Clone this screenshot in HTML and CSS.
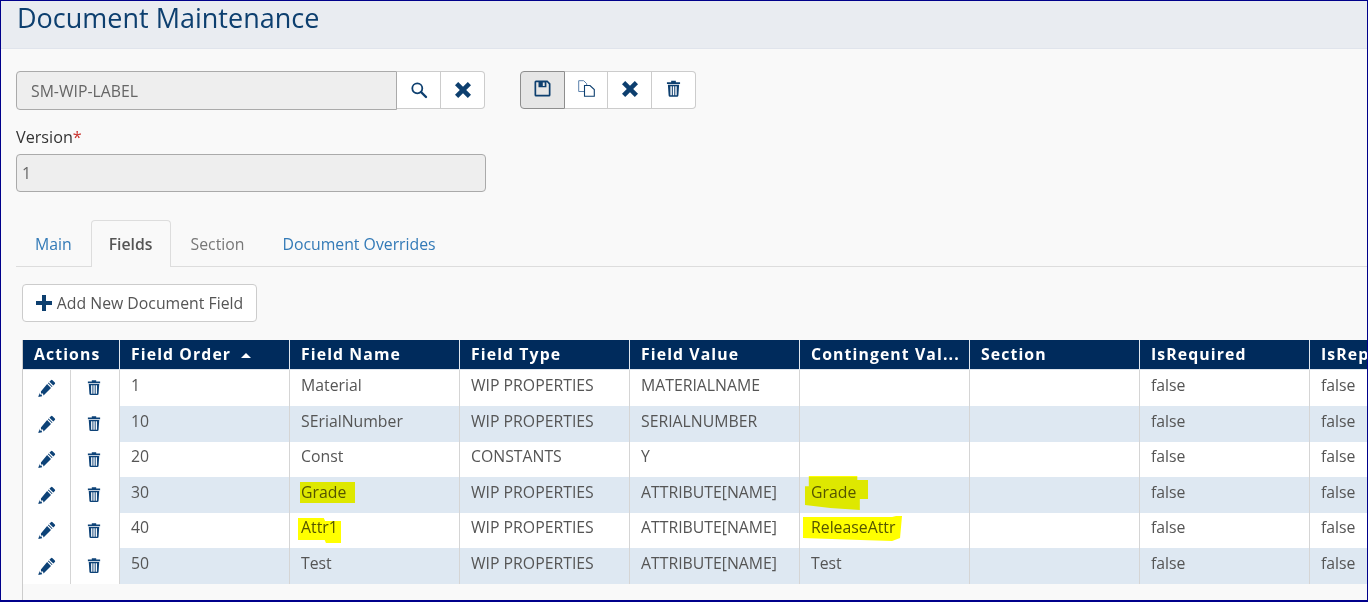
FILE: index.html
```html
<!DOCTYPE html>
<html lang="en">
  <head>
    <meta charset="UTF-8" />
    <title>Document Maintenance</title>
    <link rel="stylesheet" href="styles.css">
  </head>
  <body>
    <svg class="sprites" width="0" height="0">
      <symbol id="i-trash" viewBox="0 0 16 18">
        <path d="M5.500 2.200V.8h5v1.400H15v1.900H1V2.200zM2 5h12l-.8 11.400q-.1 1.300-1.400 1.300H4.200q-1.300 0-1.400-1.300zM4.700 6.500v9.600h1.500V6.500zM7.300 6.500v9.600h1.500V6.500zM9.900 6.500v9.600h1.500V6.500z" fill-rule="evenodd"/>
      </symbol>
      <symbol id="i-pencil" viewBox="0 0 18 18">
        <path d="M12.900 1.200q.8-.8 1.600 0l2.300 2.300q.8.8 0 1.600l-1.500 1.500-3.900-3.900zM10.600 3.500l3.900 3.900-.7.700-3.900-3.900zM9.100 5l3.900 3.900-7.500 7.500-.5-1.900-2-.1-.1-2zM1.600 13.500l.1 1.900 1.900.1.500 1.700-3.800.8z"/>
      </symbol>
      <symbol id="i-times" viewBox="0 0 18 18">
        <path d="M1 4.200 4.200 1 9 5.800 13.800 1 17 4.200 12.200 9 17 13.800 13.800 17 9 12.200 4.200 17 1 13.800 5.800 9z"/>
      </symbol>
    </svg>

    <div class="frame">
      <header class="page-head">
        <h1>Document Maintenance</h1>
      </header>

      <section class="form-top">
        <div class="top-row">
          <div class="lookup">
            <input class="lookup-input" type="text" value="SM-WIP-LABEL" disabled />
            <button class="icon-btn">
              <svg width="18" height="18" viewBox="0 0 18 18"><circle class="line" cx="7.300" cy="7.300" r="5" stroke="currentColor" stroke-width="1.800"/><path d="M11 11l5 5" stroke="currentColor" stroke-width="2.400" stroke-linecap="round"/></svg>
            </button>
            <button class="icon-btn last">
              <svg width="18" height="18"><use href="#i-times"/></svg>
            </button>
          </div>

          <div class="toolbar">
            <button class="tool-btn active">
              <svg width="17" height="17" viewBox="0 0 17 17"><path d="M2 .5h11.500L16.500 3.500V15q0 1.500-1.500 1.500H2Q.5 16.500.5 15V2Q.5.500 2 .5zM2.200 2.200v12.600h12.600V4.200L13 2.200h-.6v5H4.500v-5zM8.800 2.600v3.400h1.900V2.600z" fill-rule="evenodd"/></svg>
            </button>
            <button class="tool-btn">
              <svg width="17" height="17" viewBox="0 0 17 17"><path class="line" d="M6 11.500H.7V.7h5l3 3v2" stroke="#5c82ad" stroke-width="1"/><path class="line" d="M6.500 5.500h5.500l4.300 4v6.800H6.500z" stroke="currentColor" stroke-width="1.100"/></svg>
            </button>
            <button class="tool-btn">
              <svg width="18" height="18"><use href="#i-times"/></svg>
            </button>
            <button class="tool-btn">
              <svg width="15" height="17"><use href="#i-trash"/></svg>
            </button>
          </div>
        </div>

        <label class="field-label">Version<span class="req">*</span></label>
        <input class="version-input" type="text" value="1" disabled />
      </section>

      <nav class="tabs">
        <a class="tab">Main</a>
        <a class="tab current">Fields</a>
        <a class="tab off">Section</a>
        <a class="tab">Document Overrides</a>
      </nav>

      <div class="add-row">
        <button class="add-btn">
          <svg width="16" height="16" viewBox="0 0 16 16"><path d="M6 0h4v6h6v4h-6v6H6v-6H0V6h6z"/></svg>
          Add New Document Field
        </button>
      </div>

      <div class="grid-wrap">
        <table class="grid">
          <colgroup>
            <col class="c-act" /><col class="c-act2" />
            <col class="c-col" /><col class="c-col" /><col class="c-col" /><col class="c-col" />
            <col class="c-col" /><col class="c-col" /><col class="c-col" /><col class="c-col" />
          </colgroup>
          <thead>
            <tr>
              <th colspan="2">Actions</th>
              <th>Field Order <span class="sort"></span></th>
              <th>Field Name</th>
              <th>Field Type</th>
              <th>Field Value</th>
              <th>Contingent Val...</th>
              <th>Section</th>
              <th>IsRequired</th>
              <th>IsRepeat</th>
            </tr>
          </thead>
          <tbody>
            <tr>
              <td class="act"><svg width="18" height="18"><use href="#i-pencil"/></svg></td>
              <td class="act"><svg width="14" height="17"><use href="#i-trash"/></svg></td>
              <td>1</td><td>Material</td><td>WIP PROPERTIES</td><td>MATERIALNAME</td><td></td><td></td><td>false</td><td>false</td>
            </tr>
            <tr>
              <td class="act"><svg width="18" height="18"><use href="#i-pencil"/></svg></td>
              <td class="act"><svg width="14" height="17"><use href="#i-trash"/></svg></td>
              <td>10</td><td>SErialNumber</td><td>WIP PROPERTIES</td><td>SERIALNUMBER</td><td></td><td></td><td>false</td><td>false</td>
            </tr>
            <tr>
              <td class="act"><svg width="18" height="18"><use href="#i-pencil"/></svg></td>
              <td class="act"><svg width="14" height="17"><use href="#i-trash"/></svg></td>
              <td>20</td><td>Const</td><td>CONSTANTS</td><td>Y</td><td></td><td></td><td>false</td><td>false</td>
            </tr>
            <tr>
              <td class="act"><svg width="18" height="18"><use href="#i-pencil"/></svg></td>
              <td class="act"><svg width="14" height="17"><use href="#i-trash"/></svg></td>
              <td>30</td><td><span class="mark mark-a">Grade</span></td><td>WIP PROPERTIES</td><td>ATTRIBUTE[NAME]</td><td><span class="mark mark-c">Grade</span></td><td></td><td>false</td><td>false</td>
            </tr>
            <tr>
              <td class="act"><svg width="18" height="18"><use href="#i-pencil"/></svg></td>
              <td class="act"><svg width="14" height="17"><use href="#i-trash"/></svg></td>
              <td>40</td><td><span class="mark mark-b">Attr1</span></td><td>WIP PROPERTIES</td><td>ATTRIBUTE[NAME]</td><td><span class="mark mark-d">ReleaseAttr</span></td><td></td><td>false</td><td>false</td>
            </tr>
            <tr>
              <td class="act"><svg width="18" height="18"><use href="#i-pencil"/></svg></td>
              <td class="act"><svg width="14" height="17"><use href="#i-trash"/></svg></td>
              <td>50</td><td>Test</td><td>WIP PROPERTIES</td><td>ATTRIBUTE[NAME]</td><td>Test</td><td></td><td>false</td><td>false</td>
            </tr>
          </tbody>
        </table>
      </div>
    </div>
  </body>
</html>
```

FILE: styles.css
```css
html, body {
  margin: 0;
  height: 100%;
  overflow: hidden;
}
body {
  font-family: "Open Sans", sans-serif;
  font-size: 15.8px;
  color: #555;
  background: #f9f9f9;
}
.sprites {
  position: absolute;
}
svg {
  fill: currentColor;
  display: block;
}
svg .line {
  fill: none;
}
.frame {
  box-sizing: border-box;
  height: 602px;
  border: 1px solid #00008b;
  border-bottom-width: 2px;
  overflow: hidden;
  display: flex;
  flex-direction: column;
}
.page-head {
  height: 47px;
  flex: none;
  background: #e9ecf1;
  border-bottom: 1px solid #e0e4ec;
  padding-left: 16px;
}
.page-head h1 {
  margin: 0;
  font-size: 27px;
  line-height: 33px;
  font-weight: 400;
  color: #0d3f6f;
}

.form-top {
  padding: 22px 0 0 15px;
  flex: none;
}
.top-row {
  display: flex;
  align-items: flex-start;
}
.lookup {
  display: flex;
  width: 469px;
  height: 39px;
}
.lookup-input, .version-input {
  box-sizing: border-box;
  font: inherit;
  color: #666;
  background: #eee;
  border: 1px solid #aaa;
  border-radius: 4px;
}
.lookup-input {
  width: 381px;
  height: 39px;
  padding: 0 14px;
  border-radius: 4px 0 0 4px;
}
.icon-btn, .tool-btn, .add-btn {
  font: inherit;
  background: #fff;
  color: #0d3f6f;
  border: 1px solid #ccc;
  padding: 0;
  display: flex;
  align-items: center;
  justify-content: center;
}
.icon-btn {
  width: 44px;
  height: 38px;
  border-left: 0;
}
.icon-btn.last {
  border-radius: 0 4px 4px 0;
  width: 44px;
}
.toolbar {
  display: flex;
  margin-left: 35px;
  height: 38px;
}
.tool-btn {
  width: 44px;
  height: 38px;
  border-left: 0;
  padding-bottom: 3px;
}
.tool-btn:first-child {
  border: 1px solid #8e8e8e;
  border-radius: 4px 0 0 4px;
  width: 45px;
}
.tool-btn:nth-child(2) {
  width: 43px;
}
.tool-btn:last-child {
  border-radius: 0 4px 4px 0;
}
.tool-btn.active {
  background: #e6e6e6;
}
.field-label {
  display: block;
  margin-top: 16px;
  line-height: 22px;
  font-size: 16.2px;
  color: #333;
}
.req {
  color: #c9302c;
}
.version-input {
  display: block;
  width: 470px;
  height: 38px;
  margin-top: 6px;
  padding: 0 5px;
}

.tabs {
  display: flex;
  flex: none;
  margin: 28px 0 0 15px;
  height: 46px;
  border-bottom: 1px solid #ddd;
}
.tab {
  padding: 13px 19px 0 19px;
  line-height: 22px;
  color: #337ab7;
}
.tab.current {
  color: #555;
  font-weight: 600;
  background: #f9f9f9;
  border: 1px solid #ddd;
  border-bottom: 0;
  border-radius: 4px 4px 0 0;
  margin-bottom: -1px;
  height: 47px;
  box-sizing: border-box;
  padding: 12px 17px 0;
}
.tab.off {
  color: #777;
  padding-right: 19px;
  padding-left: 20px;
}

.add-row {
  flex: none;
  padding: 17px 0 0 21px;
}
.add-btn {
  height: 38px;
  width: 235px;
  gap: 5px;
  border-radius: 4px;
  color: #555;
  box-sizing: border-box;
}
.add-btn svg {
  color: #0d3f6f;
}

.grid-wrap {
  flex: 1;
  margin: 18px 0 0 21px;
  border-left: 1px solid #ccc;
  overflow: hidden;
  min-height: 0;
}
.grid {
  border-collapse: separate;
  border-spacing: 0;
  table-layout: fixed;
  width: 1457px;
}
.c-act {
  width: 48px;
}
.c-act2 {
  width: 49px;
}
.c-col {
  width: 170px;
}
.grid th {
  box-sizing: border-box;
  height: 30px;
  background: #002b5c;
  color: #fff;
  font-weight: 700;
  letter-spacing: 1.1px;
  text-align: left;
  padding: 0 11px 2px;
  border-right: 1px solid #dfe6ee;
  border-bottom: 1px solid #dfe6ee;
  white-space: nowrap;
}
.sort {
  display: inline-block;
  margin-left: 5px;
  vertical-align: 2px;
  border-left: 5px solid transparent;
  border-right: 5px solid transparent;
  border-bottom: 5px solid #fff;
}
.grid td {
  box-sizing: border-box;
  height: 36px;
  padding: 0 11px 6px;
  background: #fff;
  border-right: 1px solid #d5d5d5;
  white-space: nowrap;
}
.grid tbody tr:nth-child(3) td,
.grid tbody tr:nth-child(5) td {
  height: 35px;
  padding-bottom: 7px;
}
.grid tbody tr:nth-child(even) td {
  background: #dee8f2;
}
.grid td.act,
.grid tbody tr:nth-child(n) td.act {
  background: #fff;
  padding: 0 2px 1px 0;
  color: #0d4277;
}
.grid td.act svg {
  margin: 0 auto;
}
.grid tbody tr:nth-child(n) td.act:first-child {
  padding: 0 0 1px 1px;
}
.mark {
  position: relative;
  display: inline-block;
}
.mark::before {
  content: "";
  position: absolute;
  background: #ffff00;
  mix-blend-mode: multiply;
}
.mark-a::before {
  left: -1px;
  top: 1px;
  width: 55px;
  height: 21px;
}
.mark-b::before {
  left: -3px;
  top: 2px;
  width: 43px;
  height: 25px;
  clip-path: polygon(0 0, 60% 0, 63% 12%, 100% 12%, 100% 100%, 65% 100%, 62% 88%, 0 88%);
}
.mark-c::before {
  left: -6px;
  top: -5px;
  width: 63px;
  height: 34px;
  clip-path: polygon(6% 0, 83% 0, 83% 12%, 100% 12%, 100% 68%, 87% 68%, 87% 100%, 40% 94%, 0 85%, 0 30%, 6% 30%);
}
.mark-d::before {
  left: -8px;
  top: 0;
  width: 99px;
  height: 25px;
  clip-path: polygon(0 4%, 90% 4%, 94% 0, 100% 0, 98% 88%, 90% 100%, 58% 96%, 0 88%);
}
```
